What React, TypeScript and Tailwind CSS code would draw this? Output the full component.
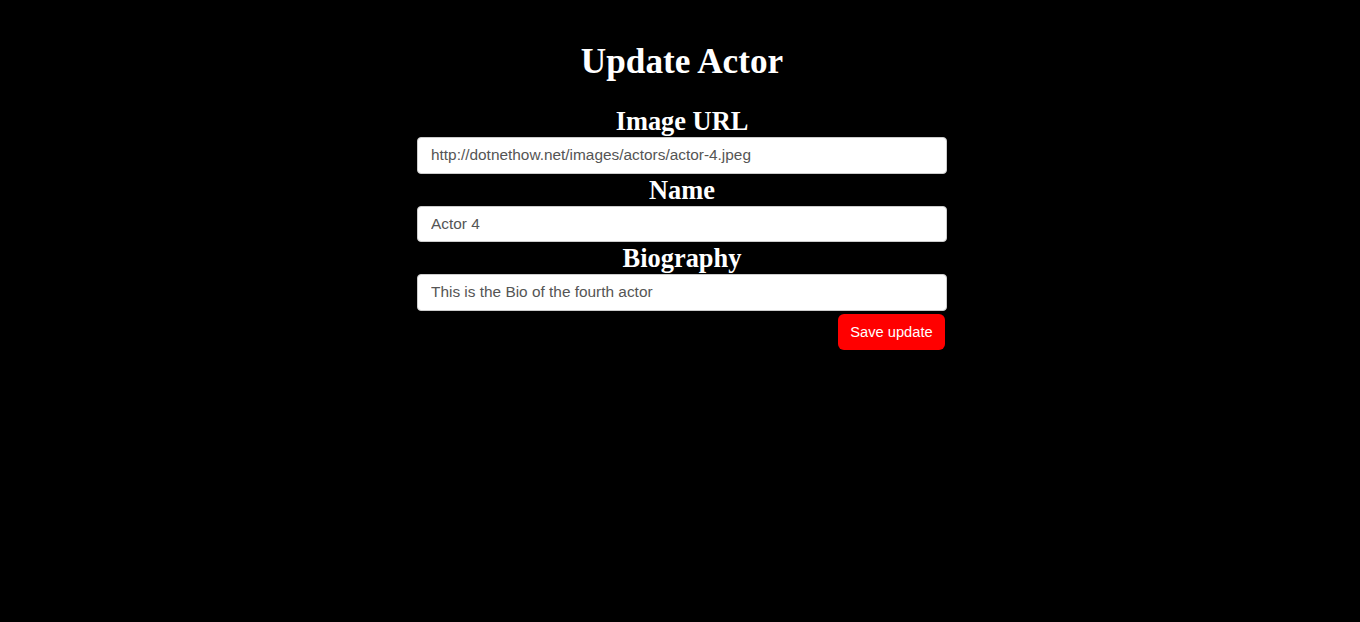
export default function App() {
  const fields = [
    { label: "Image URL", value: "http://dotnethow.net/images/actors/actor-4.jpeg" },
    { label: "Name", value: "Actor 4" },
    { label: "Biography", value: "This is the Bio of the fourth actor" },
  ];

  return (
    <div className="min-h-[622px] w-full bg-black pl-[4px] pt-[40px] text-white" style={{ fontFamily: '"Liberation Serif", serif' }}>
      <h1 className="text-center text-[35.2px] font-bold leading-[44px]">Update Actor</h1>
      <form className="mx-auto mt-[21px] flex w-[530px] flex-col" onSubmit={(e) => e.preventDefault()}>
        {fields.map((f) => (
          <div key={f.label} className="flex flex-col">
            <label className="text-center text-[26.4px] font-bold leading-[32px]">{f.label}</label>
            <input
              defaultValue={f.value}
              className="h-[36.5px] w-full rounded-[4px] border border-[#ccc] bg-white px-[13px] text-[15.4px] text-[#555] outline-none"
              style={{ fontFamily: '"Liberation Sans", Arial, sans-serif' }}
            />
          </div>
        ))}
        <div className="mt-[3px] flex justify-end pr-[2px]">
          <button
            type="submit"
            className="h-[36px] w-[107px] rounded-[6px] bg-[#ff0000] text-[14.67px] text-white"
            style={{ fontFamily: '"Liberation Sans", Arial, sans-serif' }}
          >
            Save update
          </button>
        </div>
      </form>
    </div>
  );
}
